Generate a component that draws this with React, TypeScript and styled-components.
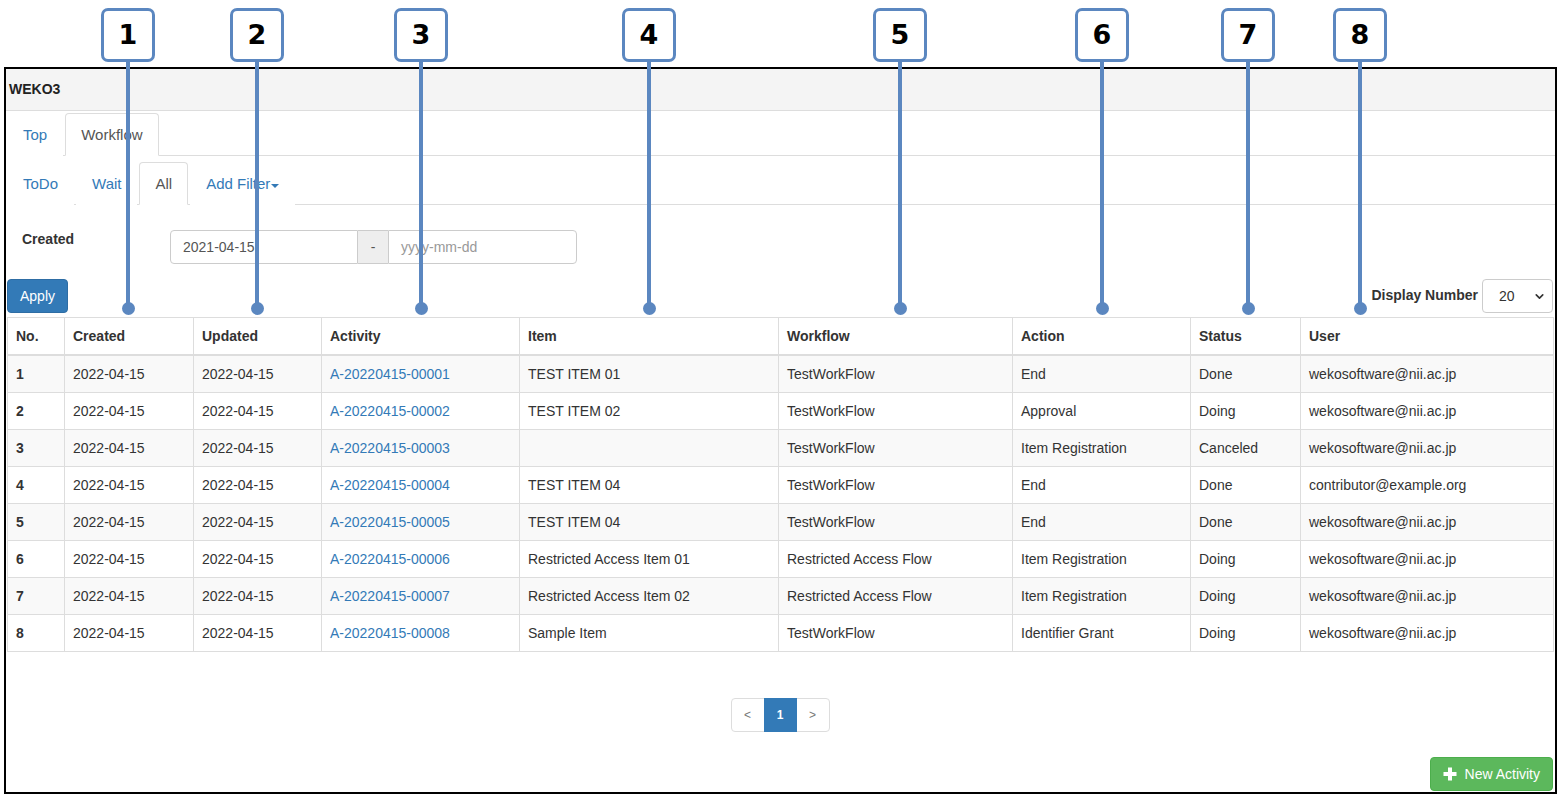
import styled, { createGlobalStyle } from "styled-components";
import { ChevronDown } from "lucide-react";

const GlobalStyle = createGlobalStyle`
  html, body {
    margin: 0;
    padding: 0;
    background: #fff;
  }
  body {
    font-family: "Liberation Sans", Arial, sans-serif;
    font-size: 14px;
    line-height: 20px;
    color: #333;
  }
  * { box-sizing: border-box; }
`;

type Row = {
  no: number;
  item: string;
  workflow: string;
  action: string;
  status: string;
  user: string;
};

const rows: Row[] = [
  { no: 1, item: "TEST ITEM 01", workflow: "TestWorkFlow", action: "End", status: "Done", user: "wekosoftware@nii.ac.jp" },
  { no: 2, item: "TEST ITEM 02", workflow: "TestWorkFlow", action: "Approval", status: "Doing", user: "wekosoftware@nii.ac.jp" },
  { no: 3, item: "", workflow: "TestWorkFlow", action: "Item Registration", status: "Canceled", user: "wekosoftware@nii.ac.jp" },
  { no: 4, item: "TEST ITEM 04", workflow: "TestWorkFlow", action: "End", status: "Done", user: "contributor@example.org" },
  { no: 5, item: "TEST ITEM 04", workflow: "TestWorkFlow", action: "End", status: "Done", user: "wekosoftware@nii.ac.jp" },
  { no: 6, item: "Restricted Access Item 01", workflow: "Restricted Access Flow", action: "Item Registration", status: "Doing", user: "wekosoftware@nii.ac.jp" },
  { no: 7, item: "Restricted Access Item 02", workflow: "Restricted Access Flow", action: "Item Registration", status: "Doing", user: "wekosoftware@nii.ac.jp" },
  { no: 8, item: "Sample Item", workflow: "TestWorkFlow", action: "Identifier Grant", status: "Doing", user: "wekosoftware@nii.ac.jp" },
];

const columns = [
  { title: "No.", width: 57 },
  { title: "Created", width: 129 },
  { title: "Updated", width: 128 },
  { title: "Activity", width: 198 },
  { title: "Item", width: 259 },
  { title: "Workflow", width: 234 },
  { title: "Action", width: 178 },
  { title: "Status", width: 110 },
  { title: "User", width: 253 },
];

// centre x of each numbered marker
const callouts = [128, 257, 421, 649, 900, 1102, 1248, 1360];

const App = () => {
  return (
    <>
      <GlobalStyle />
      <Page>
        <Frame>
          <Header>WEKO3</Header>
          <Content>
            <Tabs $top={2}>
              <Tab>Top</Tab>
              <Tab $active>Workflow</Tab>
            </Tabs>
            <Tabs $top={6}>
              <Tab>ToDo</Tab>
              <Tab>Wait</Tab>
              <Tab $active>All</Tab>
              <Tab>
                Add Filter<Caret />
              </Tab>
            </Tabs>

            <FilterRow>
              <FilterLabel>Created</FilterLabel>
              <InputGroup>
                <DateInput $side="left">2021-04-15</DateInput>
                <Addon>-</Addon>
                <DateInput $side="right" $placeholder>
                  yyyy-mm-dd
                </DateInput>
              </InputGroup>
            </FilterRow>

            <ToolRow>
              <PrimaryButton>Apply</PrimaryButton>
              <DisplayNumber>
                <DisplayLabel>Display Number</DisplayLabel>
                <SelectBox>
                  <span>20</span>
                  <ChevronDown size={13} strokeWidth={3} color="#333" />
                </SelectBox>
              </DisplayNumber>
            </ToolRow>

            <Table>
              <colgroup>
                {columns.map((c) => (
                  <col key={c.title} style={{ width: c.width }} />
                ))}
              </colgroup>
              <thead>
                <tr>
                  {columns.map((c) => (
                    <Th key={c.title}>{c.title}</Th>
                  ))}
                </tr>
              </thead>
              <tbody>
                {rows.map((r) => (
                  <Tr key={r.no} $striped={r.no % 2 === 1}>
                    <Td $bold>{r.no}</Td>
                    <Td>2022-04-15</Td>
                    <Td>2022-04-15</Td>
                    <Td>
                      <Link>A-20220415-0000{r.no}</Link>
                    </Td>
                    <Td>{r.item}</Td>
                    <Td>{r.workflow}</Td>
                    <Td>{r.action}</Td>
                    <Td>{r.status}</Td>
                    <Td>{r.user}</Td>
                  </Tr>
                ))}
              </tbody>
            </Table>

            <PagerWrap>
              <Pager>
                <PageItem $first>&lt;</PageItem>
                <PageItem $active>1</PageItem>
                <PageItem $last>&gt;</PageItem>
              </Pager>
            </PagerWrap>

            <BottomRow>
              <SuccessButton>
                <svg width="14" height="14" viewBox="0 0 14 14">
                  <rect x="5" y="0.5" width="4" height="13" fill="#fff" />
                  <rect x="0.5" y="5" width="13" height="4" fill="#fff" />
                </svg>
                New Activity
              </SuccessButton>
            </BottomRow>
          </Content>
        </Frame>

        {callouts.map((x, i) => (
          <Callout key={x} $x={x}>
            <CalloutBox>{i + 1}</CalloutBox>
            <CalloutLine />
            <CalloutDot />
          </Callout>
        ))}
      </Page>
    </>
  );
};

export default App;

const Page = styled.div`
  position: relative;
  width: 1562px;
  height: 800px;
  padding: 67px 0 0 4px;
  overflow: hidden;
`;

const Frame = styled.div`
  width: 1553px;
  height: 727px;
  border: 2px solid #000;
  display: flex;
  flex-direction: column;
`;

const Header = styled.div`
  height: 42px;
  flex-shrink: 0;
  background: #f4f4f4;
  border-bottom: 1px solid #ddd;
  padding: 0 0 2px 3px;
  display: flex;
  align-items: center;
  font-weight: 700;
  font-size: 14px;
  color: #222;
`;

const Content = styled.div`
  flex: 1;
  display: flex;
  flex-direction: column;
  padding: 0 0 0 1px;
`;

const Tabs = styled.ul<{ $top: number }>`
  list-style: none;
  margin: ${(p) => p.$top}px 0 0 0;
  padding: 0;
  display: flex;
  border-bottom: 1px solid #ddd;
`;

const Tab = styled.li<{ $active?: boolean }>`
  margin: 0 2px -1px 0;
  padding: 11px 15px 10px;
  font-size: 15px;
  line-height: 20px;
  border: 1px solid ${(p) => (p.$active ? "#ddd" : "transparent")};
  border-bottom-color: ${(p) => (p.$active ? "#fff" : "transparent")};
  border-radius: 4px 4px 0 0;
  background: #fff;
  color: ${(p) => (p.$active ? "#555" : "#337ab7")};
  display: flex;
  align-items: center;
`;

const Caret = styled.span`
  display: inline-block;
  width: 0;
  height: 0;
  margin-left: 1px;
  margin-top: 3px;
  border-top: 4px solid #337ab7;
  border-left: 4px solid transparent;
  border-right: 4px solid transparent;
`;

const FilterRow = styled.div`
  display: flex;
  align-items: flex-start;
  margin-top: 25px;
  padding-left: 15px;
`;

const FilterLabel = styled.div`
  width: 148px;
  margin-top: -1px;
  font-weight: 700;
  font-size: 14px;
  line-height: 20px;
  color: #333;
`;

const InputGroup = styled.div`
  display: flex;
  height: 34px;
`;

const DateInput = styled.div<{ $side: "left" | "right"; $placeholder?: boolean }>`
  width: ${(p) => (p.$side === "left" ? 188 : 189)}px;
  height: 34px;
  padding: 6px 12px;
  border: 1px solid #ccc;
  border-radius: ${(p) => (p.$side === "left" ? "4px 0 0 4px" : "0 4px 4px 0")};
  color: ${(p) => (p.$placeholder ? "#999" : "#555")};
  font-size: 14px;
  line-height: 20px;
  background: #fff;
`;

const Addon = styled.div`
  width: 30px;
  height: 34px;
  background: #eee;
  border-top: 1px solid #ccc;
  border-bottom: 1px solid #ccc;
  display: flex;
  align-items: center;
  justify-content: center;
  color: #555;
  font-size: 14px;
`;

const ToolRow = styled.div`
  display: flex;
  justify-content: space-between;
  align-items: center;
  margin-top: 15px;
  padding-right: 2px;
`;

const PrimaryButton = styled.div`
  height: 34px;
  padding: 6px 12px;
  background: #337ab7;
  border: 1px solid #2e6da4;
  border-radius: 4px;
  color: #fff;
  font-size: 14px;
  line-height: 20px;
`;

const DisplayNumber = styled.div`
  display: flex;
  align-items: center;
  gap: 4px;
`;

const DisplayLabel = styled.span`
  font-weight: 700;
  font-size: 14px;
  color: #333;
  margin-top: -3px;
`;

const SelectBox = styled.div`
  width: 71px;
  height: 34px;
  border: 1px solid #ccc;
  border-radius: 4px;
  display: flex;
  align-items: center;
  justify-content: space-between;
  padding: 0 6px 0 16px;
  color: #333;
  font-size: 14px;
  background: #fff;
`;

const Table = styled.table`
  margin-top: 4px;
  width: 1546px;
  table-layout: fixed;
  border-collapse: collapse;
  border: 1px solid #ddd;
`;

const Th = styled.th`
  text-align: left;
  padding: 8px;
  line-height: 20px;
  font-size: 14px;
  font-weight: 700;
  color: #333;
  border: 1px solid #ddd;
  border-bottom: 2px solid #ddd;
`;

const Tr = styled.tr<{ $striped: boolean }>`
  background: ${(p) => (p.$striped ? "#f9f9f9" : "#fff")};
`;

const Td = styled.td<{ $bold?: boolean }>`
  padding: 8px;
  line-height: 20px;
  font-size: 14px;
  font-weight: ${(p) => (p.$bold ? 700 : 400)};
  color: #333;
  border: 1px solid #ddd;
  white-space: nowrap;
  overflow: hidden;
`;

const Link = styled.span`
  color: #337ab7;
`;

const PagerWrap = styled.div`
  display: flex;
  justify-content: center;
  margin-top: 46px;
  padding-right: 2px;
`;

const Pager = styled.div`
  display: flex;
`;

const PageItem = styled.div<{ $active?: boolean; $first?: boolean; $last?: boolean }>`
  width: ${(p) => (p.$active ? 33 : 34)}px;
  height: 34px;
  display: flex;
  align-items: center;
  justify-content: center;
  font-size: 12px;
  border: 1px solid ${(p) => (p.$active ? "#337ab7" : "#ddd")};
  margin-left: ${(p) => (p.$first ? 0 : -1)}px;
  background: ${(p) => (p.$active ? "#337ab7" : "#fff")};
  color: ${(p) => (p.$active ? "#fff" : "#777")};
  font-weight: ${(p) => (p.$active ? 700 : 400)};
  border-radius: ${(p) => (p.$first ? "4px 0 0 4px" : p.$last ? "0 4px 4px 0" : "0")};
  position: relative;
  z-index: ${(p) => (p.$active ? 1 : 0)};
`;

const BottomRow = styled.div`
  display: flex;
  justify-content: flex-end;
  margin-top: 25px;
  padding-right: 2px;
`;

const SuccessButton = styled.div`
  height: 34px;
  padding: 6px 12px;
  background: #5cb85c;
  border: 1px solid #4cae4c;
  border-radius: 4px;
  color: #fff;
  font-size: 14px;
  line-height: 20px;
  display: flex;
  align-items: center;
  gap: 8px;
`;

const Callout = styled.div<{ $x: number }>`
  position: absolute;
  top: 8px;
  left: ${(p) => p.$x - 27}px;
  width: 54px;
  display: flex;
  flex-direction: column;
  align-items: center;
  pointer-events: none;
`;

const CalloutBox = styled.div`
  width: 54px;
  height: 54px;
  border: 3px solid #5b87c0;
  border-radius: 7px;
  background: #fff;
  display: flex;
  align-items: center;
  justify-content: center;
  font-family: "DejaVu Sans", Verdana, sans-serif;
  font-weight: 700;
  font-size: 27px;
  color: #000;
`;

const CalloutLine = styled.div`
  width: 4px;
  height: 246px;
  background: #5b87c0;
`;

const CalloutDot = styled.div`
  width: 13px;
  height: 13px;
  margin-top: -6px;
  border-radius: 50%;
  background: #5b87c0;
`;
